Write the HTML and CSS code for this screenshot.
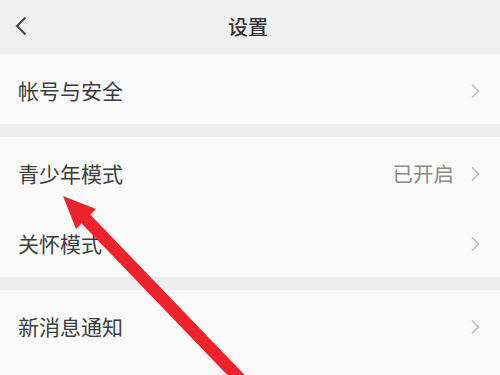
FILE: index.html
```html
<!DOCTYPE html>
<html lang="zh">
<head>
<meta charset="utf-8">
<title>设置</title>
<link rel="stylesheet" href="styles.css">
</head>
<body>
<div class="page">
  <header class="topbar">
    <svg class="back" width="14" height="20" viewBox="0 0 14 20"><path d="M11.5 1.5 L3 10 L11.5 18.5" fill="none" stroke="#444" stroke-width="2"/></svg>
    <div class="title">设置</div>
  </header>

  <section class="group">
    <div class="row">
      <span class="label">帐号与安全</span>
      <span class="right"><svg class="chev" width="10" height="16" viewBox="0 0 10 16"><path d="M2 1.5 L8.5 8 L2 14.5" fill="none" stroke="#bdbdbd" stroke-width="1.6"/></svg></span>
    </div>
  </section>

  <section class="group">
    <div class="row">
      <span class="label">青少年模式</span>
      <span class="right"><span class="value">已开启</span><svg class="chev" width="10" height="16" viewBox="0 0 10 16"><path d="M2 1.5 L8.5 8 L2 14.5" fill="none" stroke="#bdbdbd" stroke-width="1.6"/></svg></span>
    </div>
    <div class="row">
      <span class="label">关怀模式</span>
      <span class="right"><svg class="chev" width="10" height="16" viewBox="0 0 10 16"><path d="M2 1.5 L8.5 8 L2 14.5" fill="none" stroke="#bdbdbd" stroke-width="1.6"/></svg></span>
    </div>
  </section>

  <section class="group">
    <div class="row">
      <span class="label">新消息通知</span>
      <span class="right"><svg class="chev" width="10" height="16" viewBox="0 0 10 16"><path d="M2 1.5 L8.5 8 L2 14.5" fill="none" stroke="#bdbdbd" stroke-width="1.6"/></svg></span>
    </div>
    <div class="row"></div>
  </section>

  <svg class="arrow" width="500" height="375" viewBox="0 0 500 375">
    <defs>
      <filter id="soft" x="-10%" y="-10%" width="120%" height="120%">
        <feGaussianBlur stdDeviation="0.7"/>
      </filter>
    </defs>
    <g filter="url(#soft)" fill="#ee2429">
      <polygon points="63,196 96,209 76,229"/>
      <line x1="84" y1="217" x2="262" y2="402" stroke="#ee2429" stroke-width="12.5"/>
    </g>
  </svg>
</div>
</body>
</html>
```

FILE: styles.css
```css
html, body {
  margin: 0;
  padding: 0;
}
body {
  background: #efefef;
  font-family: "Noto Sans CJK SC", "Noto Sans", sans-serif;
  color: #3b3b3b;
}
.page {
  position: relative;
  width: 500px;
  height: 375px;
  overflow: hidden;
  background: #eeeeee;
}
.topbar {
  height: 54px;
  display: flex;
  align-items: center;
  justify-content: center;
  position: relative;
  background: #f0f0f0;
}
.back {
  position: absolute;
  left: 14px;
  top: 16px;
}
.title {
  font-size: 20px;
  color: #333;
  font-weight: 500;
  line-height: 1;
  margin-left: -4px;
}
.group {
  background: #fafafa;
  margin-bottom: 13px;
}
.row {
  height: 70px;
  display: flex;
  align-items: center;
  justify-content: space-between;
  padding: 3px 20px 0 18px;
  box-sizing: border-box;
}
.label {
  font-size: 21px;
  color: #3d3d3d;
  line-height: 1;
}
.right {
  display: flex;
  align-items: center;
  gap: 16px;
}
.value {
  font-size: 20.5px;
  color: #8a8a8a;
  line-height: 1;
}
.chev {
  display: block;
}
.arrow {
  position: absolute;
  left: 0;
  top: 0;
  pointer-events: none;
}
```
